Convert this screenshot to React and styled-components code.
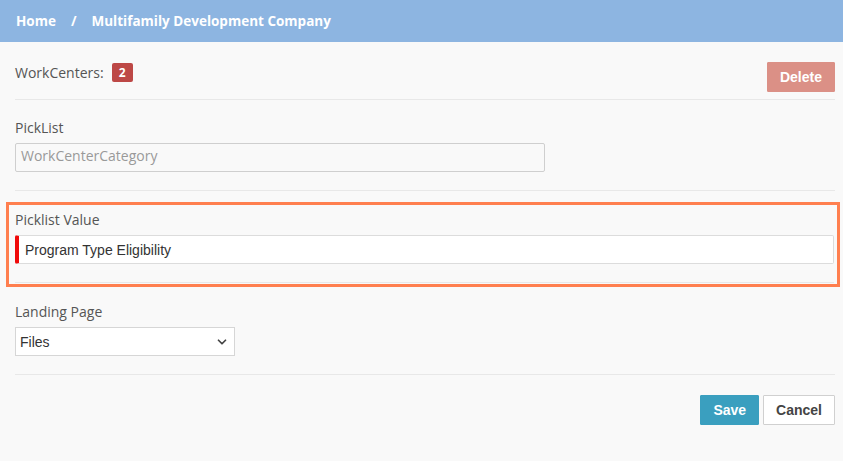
import React from 'react';
import styled, { createGlobalStyle } from 'styled-components';
import { ChevronDown } from 'lucide-react';

const pageBg = "#f9f9f9";
const lineColor = "#e8e8e8";
const labelFont = "'Open Sans', 'Noto Sans', sans-serif";
const fieldFont = "'Liberation Sans', Arial, sans-serif";

const GlobalStyle = createGlobalStyle`
  body {
    margin: 0;
    background: ${pageBg};
    font-family: ${labelFont};
  }
`;

const Page = styled.div`
  min-height: 461px;
  background: ${pageBg};
`;

const Header = styled.div`
  height: 42px;
  background: #8db5e1;
  display: flex;
  align-items: center;
  padding-left: 16px;
  gap: 15px;
  color: #fff;
  font-weight: 700;
  font-size: 13.5px;
`;

const Crumb = styled.span`
  white-space: nowrap;
`;

const Content = styled.div`
  padding: 0 8px 0 15px;
`;

const TopRow = styled.div`
  display: flex;
  justify-content: space-between;
  align-items: flex-start;
  padding: 20px 0 7px;
  border-bottom: 1px solid ${lineColor};
`;

const CountGroup = styled.div`
  display: flex;
  align-items: center;
  gap: 8px;
  height: 20px;
  color: #555;
  font-size: 14px;
`;

const Badge = styled.span`
  background: #bd4846;
  color: #fff;
  font-weight: 700;
  font-size: 12px;
  width: 21px;
  height: 19px;
  border-radius: 2px;
  display: flex;
  align-items: center;
  justify-content: center;
`;

const Button = styled.button`
  font-family: ${fieldFont};
  font-weight: 700;
  font-size: 14px;
  height: 30px;
  padding: 0 ${p => p.$pad || 12}px;
  border-radius: 1px;
  border: 1px solid ${p => p.$border};
  background: ${p => p.$bg};
  color: ${p => p.$color};
  cursor: pointer;
`;

const Section = styled.div`
  padding: ${p => p.$top ?? 18}px 0 18px;
  border-bottom: 1px solid ${lineColor};
`;

const Highlight = styled.div`
  margin: 11px -5px 0 -9px;
  border: 3px solid #ff7f4f;
  padding: 5px 3px 1px 6px;
`;

const Label = styled.div`
  color: #555;
  font-size: 14px;
  line-height: 20px;
  margin-bottom: 5px;
`;

const TextBox = styled.div`
  box-sizing: border-box;
  height: 29px;
  width: ${p => p.$width || '100%'};
  border: 1px solid ${p => p.$readOnly ? '#cfcfcf' : '#dcdcdc'};
  border-left: ${p => p.$required ? '4px solid #f00a0a' : undefined};
  border-radius: 2px;
  background: ${p => p.$readOnly ? pageBg : '#fff'};
  color: ${p => p.$readOnly ? '#999' : '#333'};
  font-family: ${p => p.$readOnly ? labelFont : fieldFont};
  font-size: 14px;
  display: flex;
  align-items: ${p => p.$readOnly ? 'flex-start' : 'center'};
  padding: ${p => p.$readOnly ? '2px 5px' : '0 6px'};
`;

const SelectWrap = styled.div`
  position: relative;
  width: 220px;
`;

const Select = styled.select`
  appearance: none;
  box-sizing: border-box;
  width: 100%;
  height: 29px;
  border: 1px solid #d6d6d6;
  background: #fff;
  color: #333;
  font-family: ${fieldFont};
  font-size: 14px;
  padding: 0 4px;
  outline: none;
`;

const Chevron = styled(ChevronDown)`
  position: absolute;
  right: 6px;
  top: 8px;
  pointer-events: none;
  color: #444;
`;

const Actions = styled.div`
  display: flex;
  justify-content: flex-end;
  gap: 4px;
  padding-top: 20px;
`;

function App() {
  return (
    <Page>
      <GlobalStyle />
      <Header>
        <Crumb>Home</Crumb>
        <Crumb>/</Crumb>
        <Crumb>Multifamily Development Company</Crumb>
      </Header>
      <Content>
        <TopRow>
          <CountGroup>
            WorkCenters:
            <Badge>2</Badge>
          </CountGroup>
          <Button $bg="#db9086" $border="#db9086" $color="#fff">Delete</Button>
        </TopRow>

        <Section>
          <Label>PickList</Label>
          <TextBox $readOnly $width="530px">WorkCenterCategory</TextBox>
        </Section>

        <Highlight>
          <Section $top={0}>
            <Label>Picklist Value</Label>
            <TextBox $required>Program Type Eligibility</TextBox>
          </Section>
        </Highlight>

        <Section $top={15}>
          <Label>Landing Page</Label>
          <SelectWrap>
            <Select defaultValue="Files">
              <option>Files</option>
            </Select>
            <Chevron size={14} strokeWidth={3} />
          </SelectWrap>
        </Section>

        <Actions>
          <Button $bg="#3a9fbf" $border="#3a9fbf" $color="#fff">Save</Button>
          <Button $bg="#fff" $border="#d0d0d0" $color="#444">Cancel</Button>
        </Actions>
      </Content>
    </Page>
  );
}

export default App;
